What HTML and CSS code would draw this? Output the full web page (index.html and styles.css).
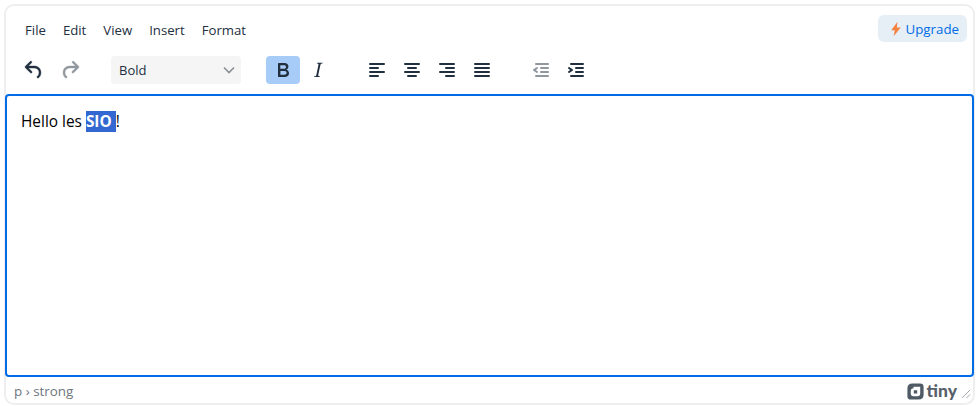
FILE: index.html
```html
<!DOCTYPE html>
<html lang="fr">

<head>
    <meta charset="utf-8">
    <meta name="viewport" content="width=device-width, initial-scale=1.0">
    <title>Editeur</title>
    <link rel="stylesheet" href="styles.css">
</head>

<body>
    <div class="editor">
        <div class="menubar">
            <div class="menu_links">
                <span>File</span>
                <span>Edit</span>
                <span>View</span>
                <span>Insert</span>
                <span>Format</span>
            </div>
            <button class="upgrade">
                <svg width="12" height="16" viewBox="0 0 12 16"><path d="M7.500.8 1.200 9.200h3.600L3.600 15.200l7.200-8.800H6.800Z"/></svg>
                Upgrade
            </button>
        </div>

        <div class="toolbar">
            <div class="group group_history">
                <button class="tool"><svg width="24" height="24" viewBox="0 0 24 24"><path d="M6.400 8H12c3.700 0 6.200 2 6.800 5.100.6 2.700-.4 5.600-2.300 6.800a1 1 0 0 1-1-1.800c1.100-.6 1.800-2.700 1.400-4.600-.5-2.100-2.100-3.500-4.900-3.500H6.400l3.300 3.300a1 1 0 1 1-1.400 1.400l-5-5a1 1 0 0 1 0-1.400l5-5a1 1 0 0 1 1.400 1.400L6.400 8Z"/></svg></button>
                <button class="tool disabled"><svg width="24" height="24" viewBox="0 0 24 24"><path d="M17.600 8H12c-3.700 0-6.200 2-6.800 5.100-.6 2.700.4 5.600 2.300 6.800a1 1 0 0 0 1-1.800c-1.100-.6-1.800-2.700-1.400-4.600.5-2.100 2.100-3.500 4.900-3.500h5.600l-3.300 3.300a1 1 0 1 0 1.400 1.400l5-5a1 1 0 0 0 0-1.400l-5-5a1 1 0 0 0-1.400 1.400L17.600 8Z"/></svg></button>
            </div>

            <div class="select">
                <span>Bold</span>
                <svg width="12" height="12" viewBox="0 0 12 12"><path d="M1 3.500 6 8.500l5-5" fill="none" stroke="#8b8f95" stroke-width="1.600"/></svg>
            </div>

            <div class="group">
                <button class="tool active"><svg width="24" height="24" viewBox="0 0 24 24"><path d="M7.800 19c-.3 0-.5 0-.6-.2l-.2-.5V5.700c0-.2 0-.4.2-.5l.6-.2h5c1.500 0 2.700.3 3.500 1 .7.600 1.100 1.400 1.100 2.500a3 3 0 0 1-.6 1.900c-.4.600-1 1-1.600 1.200.4.100.9.3 1.300.6s.8.700 1 1.200c.4.400.5 1 .5 1.600 0 1.300-.4 2.300-1.300 3-.8.700-2.100 1-3.800 1H7.800Zm5-8.300c.6 0 1.200-.1 1.600-.5.400-.3.600-.7.600-1.300 0-1.100-.8-1.700-2.300-1.700H9.300v3.500h3.400Zm.5 6c.7 0 1.300-.1 1.700-.4.400-.4.600-.9.600-1.500s-.2-1-.7-1.400c-.4-.3-1-.4-2-.4H9.400v3.800h4Z"/></svg></button>
                <button class="tool"><svg width="24" height="24" viewBox="0 0 24 24"><path d="m16.700 4.700-.1.900h-.3c-.6 0-1 0-1.400.3-.3.3-.4.600-.5 1.100l-2.100 9.800v.6c0 .5.400.8 1.400.8h.2l-.2.800H8l.2-.8h.2c1.100 0 1.800-.5 2-1.500l2-9.800.1-.5c0-.6-.4-.8-1.400-.8h-.3l.2-.9h5.800Z"/></svg></button>
            </div>

            <div class="group">
                <button class="tool"><svg width="24" height="24" viewBox="0 0 24 24"><path d="M5 5h14a1 1 0 0 1 0 2H5a1 1 0 1 1 0-2Zm0 4h8a1 1 0 0 1 0 2H5a1 1 0 0 1 0-2Zm0 4h14a1 1 0 0 1 0 2H5a1 1 0 0 1 0-2Zm0 4h8a1 1 0 0 1 0 2H5a1 1 0 0 1 0-2Z"/></svg></button>
                <button class="tool"><svg width="24" height="24" viewBox="0 0 24 24"><path d="M5 5h14a1 1 0 0 1 0 2H5a1 1 0 1 1 0-2Zm3 4h8a1 1 0 0 1 0 2H8a1 1 0 0 1 0-2Zm-3 4h14a1 1 0 0 1 0 2H5a1 1 0 0 1 0-2Zm3 4h8a1 1 0 0 1 0 2H8a1 1 0 0 1 0-2Z"/></svg></button>
                <button class="tool"><svg width="24" height="24" viewBox="0 0 24 24"><path d="M5 5h14a1 1 0 0 1 0 2H5a1 1 0 1 1 0-2Zm6 4h8a1 1 0 0 1 0 2h-8a1 1 0 0 1 0-2Zm-6 4h14a1 1 0 0 1 0 2H5a1 1 0 0 1 0-2Zm6 4h8a1 1 0 0 1 0 2h-8a1 1 0 0 1 0-2Z"/></svg></button>
                <button class="tool"><svg width="24" height="24" viewBox="0 0 24 24"><path d="M5 5h14a1 1 0 0 1 0 2H5a1 1 0 1 1 0-2Zm0 4h14a1 1 0 0 1 0 2H5a1 1 0 0 1 0-2Zm0 4h14a1 1 0 0 1 0 2H5a1 1 0 0 1 0-2Zm0 4h14a1 1 0 0 1 0 2H5a1 1 0 0 1 0-2Z"/></svg></button>
            </div>

            <div class="group">
                <button class="tool disabled"><svg width="24" height="24" viewBox="0 0 24 24"><path d="M7 5h12a1 1 0 0 1 0 2H7a1 1 0 1 1 0-2Zm5 4h7a1 1 0 0 1 0 2h-7a1 1 0 0 1 0-2Zm0 4h7a1 1 0 0 1 0 2h-7a1 1 0 0 1 0-2Zm-5 4h12a1 1 0 0 1 0 2H7a1 1 0 0 1 0-2Zm1.600-3.800a1 1 0 0 1-1.200 1.600l-3-2a1 1 0 0 1 0-1.600l3-2a1 1 0 0 1 1.200 1.600L6.800 12l1.800 1.200Z"/></svg></button>
                <button class="tool"><svg width="24" height="24" viewBox="0 0 24 24"><path d="M7 5h12a1 1 0 0 1 0 2H7a1 1 0 1 1 0-2Zm5 4h7a1 1 0 0 1 0 2h-7a1 1 0 0 1 0-2Zm0 4h7a1 1 0 0 1 0 2h-7a1 1 0 0 1 0-2Zm-5 4h12a1 1 0 0 1 0 2H7a1 1 0 0 1 0-2Zm-2.600-3.800L6.200 12l-1.800-1.200a1 1 0 0 1 1.200-1.600l3 2a1 1 0 0 1 0 1.600l-3 2a1 1 0 1 1-1.200-1.600Z"/></svg></button>
            </div>
        </div>

        <div class="content">
            <p>Hello les <strong>SIO </strong>!</p>
        </div>

        <div class="statusbar">
            <span class="path">p › strong</span>
            <div class="brand">
                <svg class="brand_logo" width="17" height="17" viewBox="0 0 17 17"><path fill-rule="evenodd" d="M5.500.4H13.200Q16.600.4 16.600 3.800V11.500Q16.600 16.600 11.500 16.600H3.800Q.4 16.600.4 13.200V5.500Q.4.4 5.500.4ZM6.500 3.800V5.300Q3.800 5.500 3.800 8V10.500Q3.800 13.200 6.500 13.200H10.500Q13.200 13.200 13.200 10.500V3.800ZM6.800 7.200H10.200V10.400H6.800Z"/></svg>
                <span class="brand_name">tiny</span>
                <svg class="grip" width="10" height="10" viewBox="0 0 10 10"><path d="M1 9 9 1M5.500 9 9 5.500" fill="none" stroke="#a6aab0" stroke-width="1"/></svg>
            </div>
        </div>
    </div>
</body>

</html>
```

FILE: styles.css
```css
body {
    margin: 0;
    padding: 4px;
    font-family: "Open Sans", sans-serif;
    background-color: white;
}

button {
    font-family: inherit;
    border: none;
    padding: 0;
}

/* --------- EDITOR --------------- */
.editor {
    height: 397px;
    display: flex;
    flex-direction: column;
    border: 2px solid #eeeeee;
    border-radius: 10px;
}

/* --------- MENU --------------- */
.menubar {
    height: 38px;
    box-sizing: border-box;
    padding-top: 9px;
    padding-right: 6px;
    padding-left: 19px;
    display: flex;
    justify-content: space-between;
    align-items: flex-start;
}

.menu_links {
    display: flex;
    gap: 17px;
    margin-top: 6px;
    font-size: 13.2px;
    line-height: 18px;
    color: #222f3e;
}

.upgrade {
    width: 89px;
    height: 27px;
    box-sizing: border-box;
    padding-right: 8px;
    display: flex;
    align-items: center;
    justify-content: flex-end;
    gap: 4px;
    font-size: 13.3px;
    color: #006ce7;
    background-color: #e6eef6;
    border-radius: 6px;
}

.upgrade svg {
    fill: #f5813f;
}

/* --------- TOOLBAR --------------- */
.toolbar {
    height: 50px;
    box-sizing: border-box;
    padding-top: 2px;
    padding-left: 10px;
    display: flex;
    gap: 25px;
    align-items: center;
}

.group {
    display: flex;
    gap: 1px;
}

.group_history {
    gap: 2px;
}

.group_history svg {
    margin-left: 2px;
    stroke: #222f3e;
    stroke-width: .4;
}

.group_history .disabled svg {
    fill: #90979f;
    stroke: #90979f;
}

.tool {
    width: 34px;
    height: 28px;
    display: flex;
    align-items: center;
    justify-content: center;
    background-color: transparent;
    border-radius: 4px;
}

.tool svg {
    fill: #222f3e;
}

.tool.disabled svg {
    fill: rgba(34, 47, 62, .5);
}

.tool.active {
    background-color: #a6ccf7;
}

.select {
    width: 130px;
    height: 28px;
    box-sizing: border-box;
    padding: 0 6px 0 8px;
    display: flex;
    align-items: center;
    justify-content: space-between;
    font-size: 13px;
    color: #222f3e;
    background-color: #f5f5f5;
    border-radius: 4px;
}

/* --------- CONTENT --------------- */
.content {
    flex: 1;
    margin: 0 -1px;
    padding: 15px 14px 13px;
    border: 2px solid #006ce7;
    border-radius: 4px;
    font-size: 15.4px;
    line-height: 22px;
    color: black;
}

.content p {
    margin: 0;
}

.content strong {
    color: white;
    background-color: #3367d1;
}

/* --------- STATUS --------------- */
.statusbar {
    height: 26px;
    box-sizing: border-box;
    flex-shrink: 0;
    padding: 2px 2px 0 8px;
    display: flex;
    justify-content: space-between;
    align-items: center;
    font-size: 13.4px;
    color: #6e757d;
}

.brand {
    display: flex;
    align-items: center;
    gap: 3px;
}

.brand_logo {
    fill: #505a64;
}

.brand_name {
    font-family: "Lato", sans-serif;
    font-size: 17.5px;
    font-weight: 900;
    line-height: 20px;
    color: #57606a;
}

.grip {
    margin-top: 6px;
    margin-left: 1px;
}
```
